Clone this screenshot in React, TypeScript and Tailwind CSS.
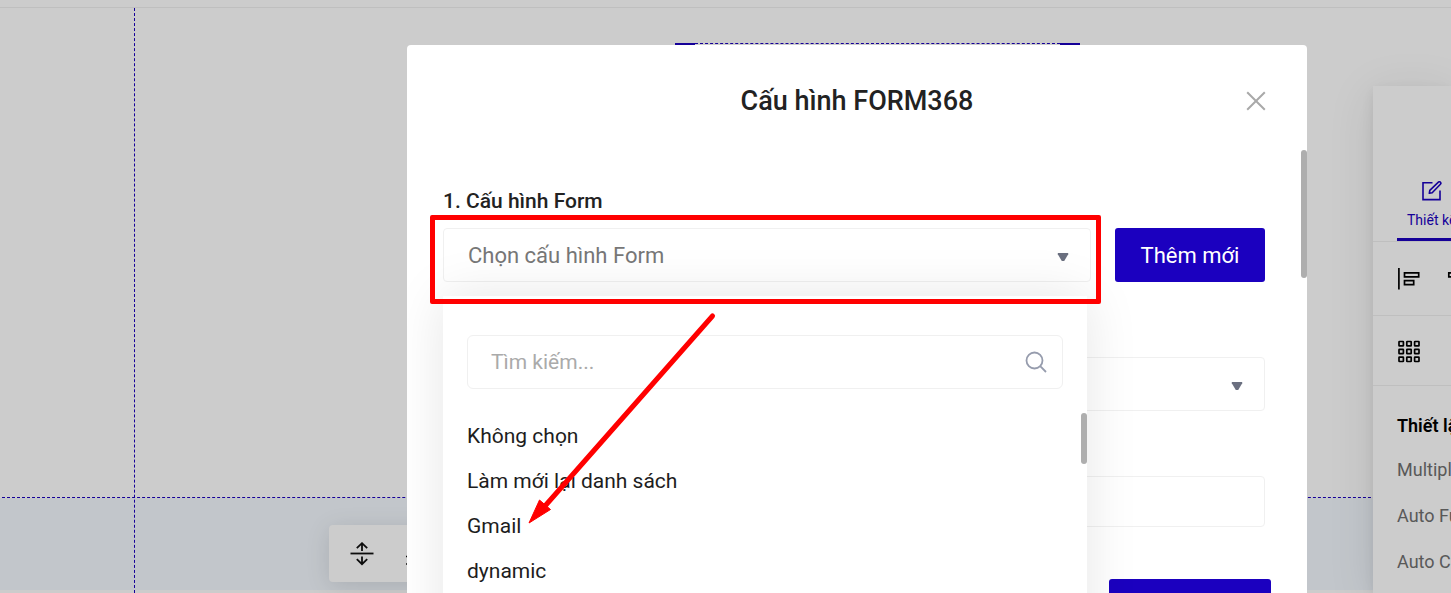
import type { ReactNode } from 'react';

const options = ['Không chọn', 'Làm mới lại danh sách', 'Gmail', 'dynamic'];
const settings = ['Multiple', 'Auto Fu', 'Auto C'];

function Caret() {
  return (
    <svg className="pointer-events-none absolute top-[22px] right-[22px] h-3 w-3" viewBox="0 0 12 12" fill="#6b7080" aria-hidden="true">
      <path d="M.8 3h10.400v1.200L7.200 11H4.800L.8 4.200z" />
    </svg>
  );
}

function EditIcon() {
  return (
    <svg className="h-5 w-5" viewBox="0 0 20 20" fill="none" stroke="currentColor" strokeWidth="1.600" aria-hidden="true">
      <path d="M10.500 1.800H1v16.800h17V9.500" />
      <path d="M7.300 12.300l.5-2.900L16.400 1.200a1.400 1.400 0 0 1 2 2l-8.200 8.500z" strokeLinejoin="round" />
    </svg>
  );
}

function AlignLeftIcon() {
  return (
    <svg className="h-6 w-6" viewBox="0 0 24 24" fill="none" stroke="#000" strokeWidth="1.700" aria-hidden="true">
      <path d="M1.900 1v21.500" />
      <path d="M7.500 5.800h14.200v4H7.500zM7.500 13.600h9.200v4H7.500z" />
    </svg>
  );
}

function AlignCenterIcon() {
  return (
    <svg className="h-6 w-6 shrink-0" viewBox="0 0 24 24" fill="none" stroke="#000" strokeWidth="1.700" aria-hidden="true">
      <path d="M12 1v4.800M12 9.800v3.800M12 17.600v4.900" />
      <path d="M3.800 5.800h16.400v4H3.800zM7.400 13.600h9.200v4H7.400z" />
    </svg>
  );
}

function GridIcon() {
  const cells = [0, 1, 2].flatMap((r) => [0, 1, 2].map((c) => [c, r]));
  return (
    <svg className="h-6 w-6" viewBox="0 0 24 24" fill="none" stroke="#000" strokeWidth="1.700" aria-hidden="true">
      {cells.map(([c, r]) => (
        <rect key={`${c}-${r}`} x={2 + c * 7.8} y={2.5 + r * 7.8} width="4.400" height="4.400" rx="0.500" />
      ))}
    </svg>
  );
}

function Row({ children, className }: { children: ReactNode; className: string }) {
  return <div className={`flex items-center border-b border-[#efefef] pl-6 ${className}`}>{children}</div>;
}

function Editor() {
  return (
    <div className="relative flex h-full flex-col overflow-hidden">
      <header className="h-2 shrink-0 border-b border-[#efefef]" />
      <section className="ml-[2px] h-[490px] shrink-0 border-b border-dashed border-[#1b00bf]" />
      <section className="flex-1 bg-[#f3f8fe]" />
      <div className="ml-[122px] h-[3px] shrink-0 bg-white" />

      <div className="absolute top-2 bottom-0 left-[134px] border-l border-dashed border-[#1b00bf]" />

      <div className="absolute top-[43px] left-[675px] flex w-[405px] items-start justify-between">
        <span className="h-[3px] w-5 bg-[#1b00bf]" />
        <span className="flex-1 border-t border-dashed border-[#1b00bf]" />
        <span className="h-[3px] w-5 bg-[#1b00bf]" />
      </div>

      <div className="absolute top-[525px] left-[329px] flex h-[57px] items-center gap-8 rounded bg-white px-[21px] shadow-[0_4px_24px_rgba(0,0,0,0.12)]">
        <button type="button" aria-label="Chiều cao">
          <svg className="h-6 w-6" viewBox="0 0 24 24" fill="none" stroke="#111" strokeWidth="1.800" aria-hidden="true">
            <path d="M.5 11.500h23" />
            <path d="M12 9V1.400M6.800 6.200L12 1.200l5.200 5M12 14.500V22M6.800 17.200l5.200 5 5.200-5" />
          </svg>
        </button>
        <button type="button" aria-label="Danh sách">
          <svg className="h-6 w-6" viewBox="0 0 24 24" fill="none" stroke="#111" strokeWidth="1.500" aria-hidden="true">
            <path d="M0 14.500h20M0 22h20" />
          </svg>
        </button>
      </div>

      <aside className="absolute top-[86px] right-0 bottom-0 w-[78px] bg-white shadow-[0_8px_48px_rgba(0,0,0,0.10),0_4px_12px_rgba(0,0,0,0.08)]">
        <div className="flex h-full flex-col overflow-hidden whitespace-nowrap">
          <div className="flex h-[156px] shrink-0 items-end border-b border-[#efefef] pl-6">
            <button type="button" className="flex shrink-0 flex-col items-center gap-[9px] border-b-[3px] border-[#1b00bf] px-[10px] pb-2 text-sm text-[#1b00bf]">
              <EditIcon />
              Thiết kế
            </button>
          </div>
          <Row className="h-[74px] shrink-0 gap-6">
            <button type="button" aria-label="Căn trái" className="shrink-0"><AlignLeftIcon /></button>
            <button type="button" aria-label="Căn giữa" className="shrink-0"><AlignCenterIcon /></button>
          </Row>
          <Row className="h-[70px] shrink-0">
            <button type="button" aria-label="Lưới"><GridIcon /></button>
          </Row>
          <div className="flex flex-col pt-[19px] pl-6 text-lg">
            <h2 className="flex h-[42px] items-center font-semibold text-black">Thiết lập</h2>
            {settings.map((s) => (
              <p key={s} className="flex h-[46px] items-center text-[#707070]">{s}</p>
            ))}
          </div>
        </div>
      </aside>
    </div>
  );
}

function Dropdown() {
  return (
    <div className="absolute top-full right-1 left-0 mt-[14px] h-[420px] bg-white px-6 pt-[39px] shadow-[0_0_50px_rgba(0,0,0,0.10)]">
      <div className="relative">
        <input
          type="search"
          aria-label="Tìm kiếm"
          placeholder="Tìm kiếm..."
          className="h-[54px] w-full rounded-md border border-[#f0f0f0] bg-white pr-14 pl-[23px] text-[21px] outline-none placeholder:text-[#aaaaaa]"
        />
        <svg className="absolute top-4 right-4 h-[22px] w-[22px]" viewBox="0 0 22 22" fill="none" stroke="#969cad" strokeWidth="1.800" aria-hidden="true">
          <circle cx="9.500" cy="9.500" r="8" />
          <path d="M15.200 15.200l5.800 5.800" />
        </svg>
      </div>
      <ul className="mt-[25px]">
        {options.map((o) => (
          <li key={o} className="flex h-[45px] items-center">
            <button type="button" className="text-[21px] text-[#1d1d1d]">{o}</button>
          </li>
        ))}
      </ul>
      <div className="absolute top-[117px] right-0 h-[51px] w-[6px] rounded-full bg-[#aeaeae]" />
    </div>
  );
}

function Dialog() {
  return (
    <div role="dialog" aria-labelledby="dialog-title" className="relative flex w-[900px] max-w-full flex-col overflow-hidden rounded-t bg-white">
      <header className="flex h-[105px] shrink-0 items-center justify-center pt-[7px]">
        <h1 id="dialog-title" className="text-[27px] leading-8 font-medium text-[#222]">Cấu hình FORM368</h1>
        <button type="button" aria-label="Đóng" className="absolute top-[46px] right-[41px]">
          <svg className="h-5 w-5" viewBox="0 0 20 20" fill="none" stroke="#a9a9a9" strokeWidth="2" aria-hidden="true">
            <path d="M1.200 1.200l17.600 17.600M18.800 1.200L1.200 18.800" />
          </svg>
        </button>
      </header>

      <form className="flex min-h-0 flex-1 flex-col pt-9 pr-[42px] pl-9" onSubmit={(e) => e.preventDefault()}>
        <label htmlFor="form-config" className="text-[21px] leading-[30px] font-medium text-[#222]">1. Cấu hình Form</label>
        <div className="relative z-10 mt-3 flex gap-6">
          <div className="relative flex-1">
            <select id="form-config" className="h-[54px] w-full appearance-none rounded border border-[#f0f0f0] bg-white px-6 text-[22px] text-[#777] outline-none">
              <option>Chọn cấu hình Form</option>
            </select>
            <Caret />
            <Dropdown />
            <div className="pointer-events-none absolute -top-[13px] -right-[10px] -bottom-[22px] -left-[13px] rounded-[2px] border-[5px] border-[#ff0000]" />
            <svg className="pointer-events-none absolute top-[82px] left-[82px] h-[216px] w-[196px]" viewBox="0 0 196 216" fill="none" aria-hidden="true">
              <path d="M187.500 6L20 196" stroke="#ff0000" strokeWidth="5" strokeLinecap="round" />
              <path d="M4 213L14.500 190 25.500 199.500z" fill="#ff0000" stroke="#ff0000" />
            </svg>
          </div>
          <button type="button" className="relative h-[54px] w-[150px] shrink-0 rounded-[3px] bg-[#1b00bf] text-[22px] text-white">Thêm mới</button>
        </div>

        <div className="relative mt-[75px] shrink-0">
          <select aria-label="Tùy chọn" className="h-[54px] w-full appearance-none rounded border border-[#f0f0f0] bg-white px-6 outline-none">
            <option />
          </select>
          <Caret />
        </div>
        <input type="text" aria-label="Giá trị" className="mt-[65px] h-[51px] w-full shrink-0 rounded border border-[#f0f0f0] bg-white px-6 outline-none" />
        <button type="button" aria-label="Lưu" className="mt-[52px] -mr-[6px] h-[54px] w-[162px] shrink-0 self-end rounded-[3px] bg-[#1b00bf]" />
      </form>

      <div className="absolute top-[105px] right-0 h-32 w-[6px] rounded-full bg-[#aeaeae]" />
    </div>
  );
}

export default function App() {
  return (
    <div className="relative h-screen overflow-hidden bg-white font-['Roboto',sans-serif]">
      <Editor />
      <div className="absolute inset-0 flex justify-center bg-black/20 pt-[45px] pl-[263px]">
        <Dialog />
      </div>
    </div>
  );
}
